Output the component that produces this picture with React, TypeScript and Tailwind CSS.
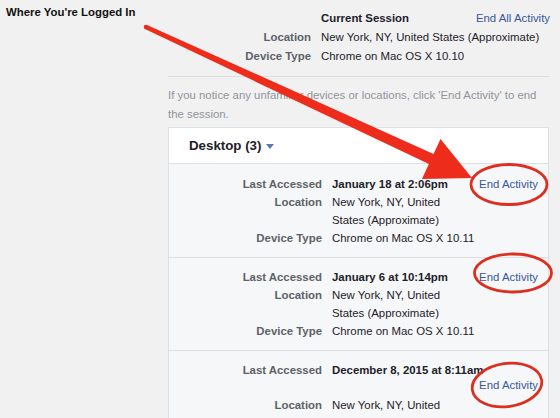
import React from "react";

type Session = {
  accessed: string;
  location: [string, string];
  device: string;
  longDate?: boolean;
};

const sessions: Session[] = [
  {
    accessed: "January 18 at 2:06pm",
    location: ["New York, NY, United", "States (Approximate)"],
    device: "Chrome on Mac OS X 10.11",
  },
  {
    accessed: "January 6 at 10:14pm",
    location: ["New York, NY, United", "States (Approximate)"],
    device: "Chrome on Mac OS X 10.11",
  },
  {
    accessed: "December 8, 2015 at 8:11am",
    location: ["New York, NY, United", "States (Approximate)"],
    device: "Chrome on Mac OS X 10.11",
    longDate: true,
  },
];

const Label = ({ children }: { children?: React.ReactNode }) => (
  <div className="pr-[10px] text-right font-bold text-[#5d6168]">{children}</div>
);

const SessionRow = ({ s, first }: { s: Session; first: boolean }) => (
  <div
    className={
      (first ? "pt-[11px]" : "pt-[10px]") +
      " grid grid-cols-[163px_145px_1fr] pb-[10px] pr-[10px] leading-[18px]"
    }
  >
    <Label>Last Accessed</Label>
    <div className={s.longDate ? "whitespace-nowrap font-bold" : "font-bold"}>
      {s.accessed}
    </div>
    {s.longDate ? (
      <>
        <div />
        <div />
        <div />
        <a className="-mt-[3px] mb-[2px] justify-self-end whitespace-nowrap text-[#365899]">
          End Activity
        </a>
      </>
    ) : (
      <a className="justify-self-end whitespace-nowrap text-[#365899]">End Activity</a>
    )}
    <Label>Location</Label>
    <div>
      {s.location[0]}
      <br />
      {s.location[1]}
    </div>
    <div />
    <Label>Device Type</Label>
    <div className="whitespace-nowrap">{s.device}</div>
    <div />
  </div>
);

export default function App() {
  return (
    <div className="relative h-[418px] w-[560px] overflow-hidden bg-[#f1f1f2] font-['Liberation_Sans',Arial,sans-serif] text-[11.4px] text-[#1d2129]">
      <div className="flex">
        <div className="w-[168px] shrink-0 pl-[6px] pt-[4px]">
          <h2 className="font-bold leading-[16px] text-[#111]">Where You're Logged In</h2>
        </div>

        <div className="w-[382px] shrink-0">
          {/* current session */}
          <div className="grid grid-cols-[143px_1fr_auto] gap-x-[10px] pt-[9px] leading-[19px]">
            <div />
            <div className="font-bold">Current Session</div>
            <a className="whitespace-nowrap text-[#365899]">End All Activity</a>
            <div className="text-right font-bold text-[#5d6168]">Location</div>
            <div className="col-span-2">New York, NY, United States (Approximate)</div>
            <div className="text-right font-bold text-[#5d6168]">Device Type</div>
            <div className="col-span-2">Chrome on Mac OS X 10.10</div>
          </div>

          <div className="mt-[10px] border-t border-[#dadde1]" />

          <p className="mt-[9px] leading-[19px] text-[#90949c]">
            <span className="whitespace-nowrap">
              If you notice any unfamiliar devices or locations, click 'End Activity' to end
            </span>
            <br />
            the session.
          </p>

          {/* desktop sessions card */}
          <div className="mt-[3px] w-[381px] border border-[#dddfe2] bg-white">
            <div className="flex h-[36px] items-center border-b border-[#dddfe2] pl-[20px] text-[13.3px] font-bold">
              Desktop (3)
              <span className="ml-[5px] mt-[2px] inline-block h-0 w-0 border-x-[4px] border-t-[5px] border-x-transparent border-t-[#5b78b0]" />
            </div>
            <div className="divide-y divide-[#dddfe2] bg-[#f6f7f9]">
              {sessions.map((s, i) => (
                <SessionRow key={s.accessed} s={s} first={i === 0} />
              ))}
            </div>
          </div>
        </div>
      </div>

      {/* red markup: arrow and circles */}
      <svg
        className="pointer-events-none absolute left-0 top-0"
        width="560"
        height="418"
        viewBox="0 0 560 418"
      >
        <polygon
          points="147,24.9 433.5,154 440.5,139.1 472,178 421.9,178.9 428.9,164 145,29.1"
          fill="#ee2c1c"
        />
        <circle cx="146" cy="27" r="2.3" fill="#ee2c1c" />
        <g fill="none" stroke="#dd2f1f" strokeWidth="2.8">
          <ellipse cx="509" cy="184.5" rx="38" ry="20" />
          <ellipse cx="513" cy="273" rx="38.5" ry="19" />
          <ellipse cx="507" cy="385" rx="35" ry="21.5" transform="rotate(-8 507 385)" />
        </g>
      </svg>
    </div>
  );
}
